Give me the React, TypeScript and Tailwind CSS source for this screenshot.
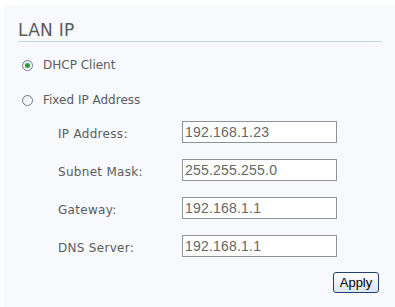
const fields = [
  { label: "IP Address:", value: "192.168.1.23" },
  { label: "Subnet Mask:", value: "255.255.255.0" },
  { label: "Gateway:", value: "192.168.1.1" },
  { label: "DNS Server:", value: "192.168.1.1" },
]

const Radio = ({ checked }: { checked?: boolean }) => (
  <span className="flex h-[11px] w-[11px] items-center justify-center rounded-full border border-[#6b7d92] bg-gradient-to-br from-[#e6e9ee] to-white">
    {checked && <span className="h-[5px] w-[5px] rounded-full bg-[#2f9a3a]" />}
  </span>
)

const App = () => {
  return (
    <div className="h-[307px] w-[395px] bg-white pl-[4px] pt-[5px] font-['DejaVu_Sans',sans-serif] text-[12px] text-[#5c5c5c]">
      <div className="h-full w-full bg-[#f7f9fc] pl-[14px] pr-[13px] pt-[16px]">
        <div className="border-b border-[#c9d5e0] pb-[2px] text-[17px] leading-[18px] tracking-[0.3px] text-[#5a5a5a]">
          LAN IP
        </div>

        <div className="mt-[17px] flex flex-col gap-[23px] pl-[4px]">
          <label className="flex h-[12px] items-center gap-[10px]">
            <Radio checked />
            DHCP Client
          </label>
          <label className="flex h-[12px] items-center gap-[10px]">
            <Radio />
            Fixed IP Address
          </label>
        </div>

        <div className="mt-[15px] flex flex-col gap-[16px]">
          {fields.map((f) => (
            <div key={f.label} className="flex h-[22px] items-center">
              <span className="w-[164px] pl-[40px] pt-[4px] tracking-[0.3px]">{f.label}</span>
              <input
                readOnly
                value={f.value}
                className="h-[22px] w-[155px] border border-[#8c959e] bg-white px-[2px] font-['Liberation_Sans',sans-serif] text-[14px] tracking-[0.2px] text-[#666] outline-none"
              />
            </div>
          ))}
        </div>

        <div className="mt-[15px] flex justify-end pr-[3px]">
          <button className="h-[21px] w-[46px] rounded-[3px] border border-[#24406e] bg-gradient-to-b from-white to-[#dce4ef] font-['Liberation_Sans',sans-serif] text-[13px] text-black">
            Apply
          </button>
        </div>
      </div>
    </div>
  )
}

export default App
